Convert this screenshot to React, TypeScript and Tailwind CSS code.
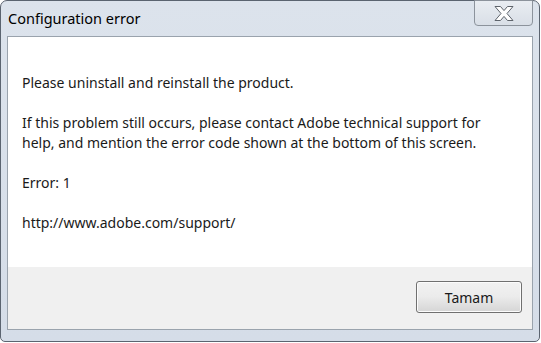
import React from "react";

export default function App() {
  const font = { fontFamily: '"Segoe UI", "Noto Sans", "Open Sans", sans-serif' };
  return (
    <div className="w-[541px] h-[343px] bg-white overflow-hidden" style={font}>
      <div className="w-[540px] h-[342px] rounded-t-[7px] rounded-b-[5px] border border-[#5b6470] bg-gradient-to-b from-[#dce3ec] to-[#d5dde8] flex flex-col">
        {/* title bar */}
        <div className="h-[35px] flex items-start justify-between shrink-0">
          <div className="pl-[7px] pt-[7px] text-[14.5px] leading-[20px] text-black">Configuration error</div>
          <div className="mr-[6px] w-[59px] h-[26px] -mt-px rounded-b-[4px] border border-[#8c939c] bg-gradient-to-b from-[#e9edf2] to-[#d9dfe7] flex items-center justify-center">
            <svg width="22" height="17" viewBox="0 0 22 17">
              <path
                d="M2 1.5 H7.5 L11 5.6 L14.5 1.5 H20 L14 8.5 L20 15.5 H14.5 L11 11.4 L7.5 15.5 H2 L8 8.5 Z"
                fill="#ffffff"
                stroke="#5e646c"
                strokeWidth="1"
                strokeLinejoin="round"
              />
            </svg>
          </div>
        </div>
        {/* client area */}
        <div className="mx-[6px] h-[294px] border border-[#9aa3ad] bg-[#f0f0f0] flex flex-col shrink-0">
          <div className="bg-white h-[230px] pl-[14px] pr-[22px] pt-[36px] text-[14px] leading-[20px] text-[#1a1a1a]">
            <p>Please uninstall and reinstall the product.</p>
            <p className="mt-[20px]">
              If this problem still occurs, please contact Adobe technical support for help, and mention the error code shown at the bottom of this screen.
            </p>
            <p className="mt-[20px]">Error: 1</p>
            <p className="mt-[20px]">http://www.adobe.com/support/</p>
          </div>
          <div className="flex-1 flex justify-end items-start pt-[14px] pr-[10px]">
            <button className="w-[106px] h-[32px] rounded-[3px] border border-[#707070] bg-gradient-to-b from-[#f2f2f2] via-[#ebebeb] to-[#d5d5d5] text-[14px] text-[#1a1a1a] shadow-[inset_0_0_0_1px_#fcfcfc]">
              Tamam
            </button>
          </div>
        </div>
      </div>
    </div>
  );
}
